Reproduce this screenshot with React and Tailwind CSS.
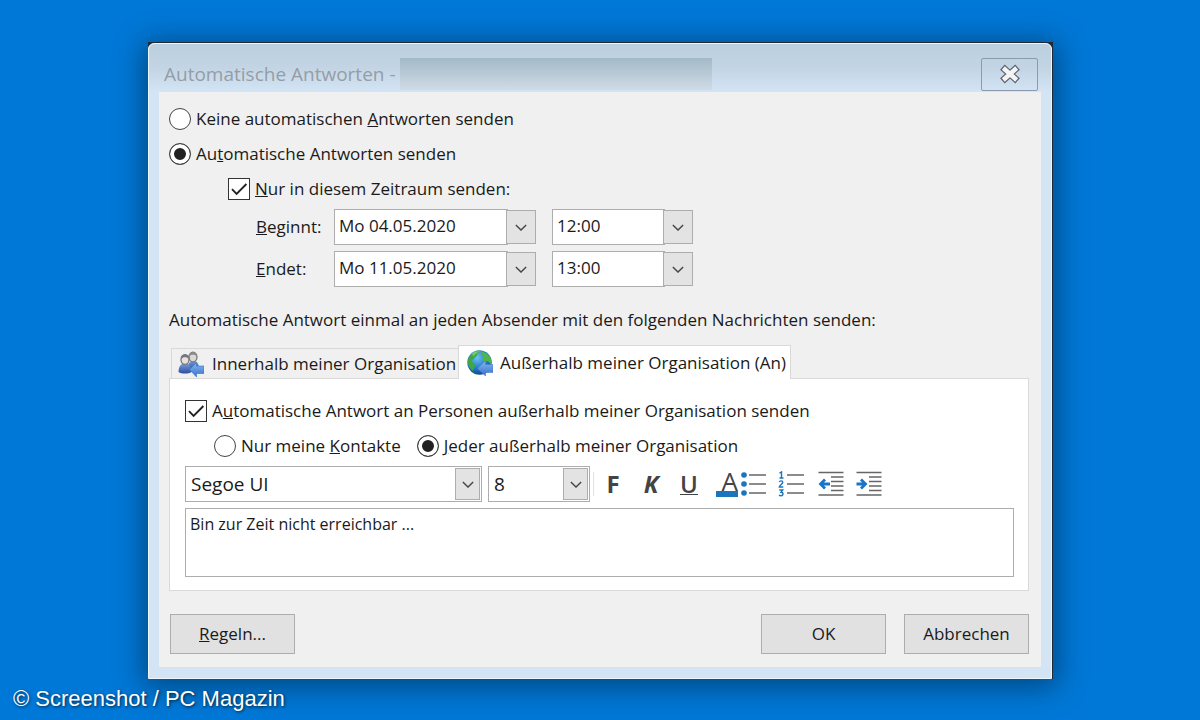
import React, { useState } from "react";

function Radio({ label, ...props }) {
  return (
    <label className="flex items-center gap-[5px] whitespace-nowrap">
      <input
        type="radio"
        className="size-[22px] shrink-0 appearance-none rounded-full border border-[#444] bg-white checked:bg-[#222] checked:shadow-[inset_0_0_0_4px_#fff]"
        {...props}
      />
      <span>{label}</span>
    </label>
  );
}

function Check({ label, ...props }) {
  return (
    <label className="flex items-center gap-[5px]">
      <span className="grid size-[22px] shrink-0">
        <input
          type="checkbox"
          className="peer col-start-1 row-start-1 size-[22px] appearance-none border border-[#333] bg-white"
          {...props}
        />
        <svg
          viewBox="0 0 22 22"
          className="pointer-events-none invisible col-start-1 row-start-1 size-[22px] peer-checked:visible"
          fill="none"
          stroke="#222"
          strokeWidth="1.9"
        >
          <path d="M4 11.2 8.6 15.8 18.4 6" />
        </svg>
      </span>
      <span>{label}</span>
    </label>
  );
}

function Chevron() {
  return (
    <svg viewBox="0 0 14 8" className="h-[7px] w-3" fill="none" stroke="#444" strokeWidth="1.6">
      <path d="M1 1 7 7 13 1" />
    </svg>
  );
}

function DateBox({ id, value, label, width }) {
  return (
    <div className={`grid items-center ${width}`}>
      <select
        id={id}
        aria-label={label}
        defaultValue={value}
        className="col-start-1 row-start-1 h-9 w-[calc(100%-28px)] appearance-none border border-[#adadad] bg-white pb-0.5 pl-1"
      >
        <option>{value}</option>
      </select>
      <span className="pointer-events-none col-start-1 row-start-1 flex h-[34px] w-[30px] items-center justify-center justify-self-end border border-[#adadad] bg-[#e3e3e3]">
        <Chevron />
      </span>
    </div>
  );
}

function FontBox({ label, value, width }) {
  return (
    <div className={`grid ${width}`}>
      <select
        aria-label={label}
        defaultValue={value}
        className="col-start-1 row-start-1 h-9 w-full appearance-none border border-[#adadad] bg-white pr-8 pl-[5px] text-[19px]"
      >
        <option>{value}</option>
      </select>
      <span className="pointer-events-none col-start-1 row-start-1 mr-0.5 flex h-8 w-[25px] items-center justify-center self-center justify-self-end border border-[#adadad] bg-[#e3e3e3]">
        <Chevron />
      </span>
    </div>
  );
}

function ReplyArrow() {
  return (
    <path
      d="M11.5 18.5 18.5 11.5V15H26v7.5h-7.5v3.5Z"
      fill="url(#arrowFill)"
      stroke="#3a6fc0"
      strokeWidth="0.6"
    />
  );
}

function PeopleIcon() {
  return (
    <svg viewBox="0 0 26 26" className="size-[26px]">
      <defs>
        <linearGradient id="arrowFill" x1="0" y1="0" x2="0" y2="1">
          <stop offset="0" stopColor="#8ab8f0" />
          <stop offset="1" stopColor="#3572cc" />
        </linearGradient>
        <linearGradient id="shirt" x1="0" y1="0" x2="0" y2="1">
          <stop offset="0" stopColor="#7a9bdc" />
          <stop offset="1" stopColor="#2b4fa0" />
        </linearGradient>
      </defs>
      <path d="M9.5 19c0-6 2-9 6-9s5.500 3 5.500 9Z" fill="url(#shirt)" />
      <ellipse cx="15" cy="6" rx="4" ry="4.800" fill="#dcd8d6" stroke="#777" strokeWidth="1.300" />
      <path d="M11 5.500C11 0 19 0 19 5.500 17 3 13 3 11 5.500Z" fill="#8a8a8c" />
      <path d="M.5 21C.5 15 3 12.500 7 12.500s6.500 3 6.500 8.500c-3 2-10 2-13 0Z" fill="url(#shirt)" />
      <ellipse cx="7" cy="8.500" rx="4" ry="4.900" fill="#e6e2e0" stroke="#777" strokeWidth="1.300" />
      <path d="M3 8C3 2 11 2 11 8 9 5.500 5 5.500 3 8Z" fill="#77777a" />
      <ReplyArrow />
    </svg>
  );
}

function GlobeIcon() {
  return (
    <svg viewBox="0 0 26 26" className="size-[26px]">
      <defs>
        <radialGradient id="sea" cx="0.4" cy="0.3" r="0.75">
          <stop offset="0" stopColor="#6cc4f2" />
          <stop offset="0.6" stopColor="#2277c8" />
          <stop offset="1" stopColor="#123f86" />
        </radialGradient>
      </defs>
      <circle cx="12.500" cy="12.500" r="12.200" fill="url(#sea)" />
      <path d="M3 5.500C6 2 9 .8 12 .6c1 1.400-.5 2.400-2 3 .5 2-1 3-2.500 4.400C6.500 9.500 5 10 4.500 11.500c1.500 1.500 3.500 2 3.500 4S6.500 19 6 21C1 17.500-1 11 3 5.500Z" fill="#3fa845" />
      <path d="M14 2c3.500-.5 7 2 9 5 1.500 2.500 1.500 5 1 7-1.500-.5-2-2.500-3.500-3-2 .5-3.500.5-5-1-.5-2 1-3 .5-4.500C15 5 13.500 3.500 14 2Z" fill="#4db848" />
      <path d="M5 3.500C8 1 11 .8 13 1.500 10 2.500 8 4 6.500 6.500Z" fill="#9fe0a0" opacity=".6" />
      <path
        d="M10.5 18.5 18.5 10.500V14.500H26v8h-7.500v3.500Z"
        fill="url(#arrowFill)"
        stroke="#4a80cc"
        strokeWidth="0.6"
      />
    </svg>
  );
}

function BulletIcon() {
  return (
    <svg viewBox="0 0 26 26" className="size-[26px]">
      <g fill="#1a75bc">
        <circle cx="3" cy="4" r="2.800" />
        <circle cx="3" cy="13" r="2.800" />
        <circle cx="3" cy="22" r="2.800" />
      </g>
      <path d="M8 4h17M8 13h17M8 22h17" stroke="#666" strokeWidth="1.400" />
    </svg>
  );
}

function NumberIcon() {
  return (
    <svg viewBox="0 0 26 26" className="size-[26px]">
      <g fill="none" stroke="#1a75bc" strokeWidth="1.400">
        <path d="M1.500 2.200 3.500 1v6M1.500 7h4" />
        <path d="M1.300 11c.6-1.600 3.600-1.400 3.400.4C4.600 13 1.400 14.500 1.300 16h4" />
        <path d="M1.300 19h3.400L3 21.300c2.600 0 2.600 3.400 0 3.400-1 0-1.600-.4-1.900-.9" />
      </g>
      <path d="M9 4h17M9 13h17M9 22h17" stroke="#666" strokeWidth="1.400" />
    </svg>
  );
}

function IndentIcon({ outward }) {
  return (
    <svg viewBox="0 0 26 26" className="size-[26px]">
      <path
        d="M.5 1.500h25M13 6h12.500M13 10.500h12.500M13 15h12.500M13 19.500h12.500M.5 24h25"
        stroke="#666"
        strokeWidth="1.400"
      />
      <path
        d={outward ? "M12 13H3M7 8.500 2.500 13 7 17.500" : "M.5 13h9M5 8.500 9.500 13 5 17.500"}
        fill="none"
        stroke="#1a75c8"
        strokeWidth="2.800"
      />
    </svg>
  );
}

function ToolButton({ label, layout = "w-[38px] justify-center", children }) {
  return (
    <button
      type="button"
      aria-label={label}
      className={`flex h-9 items-center text-2xl leading-none text-[#444] ${layout}`}
    >
      {children}
    </button>
  );
}

function DialogButton({ children }) {
  return (
    <button type="button" className="h-10 w-[125px] border border-[#adadad] bg-[#e1e1e1]">
      {children}
    </button>
  );
}

export default function App() {
  const [mode, setMode] = useState("send");
  const [audience, setAudience] = useState("all");

  return (
    <div className="flex min-h-screen flex-col bg-[#0078d7] pt-[42px] font-['Open_Sans','Noto_Sans',sans-serif] text-[17px] leading-6 text-[#1a1a1a]">
      <main className="mr-[147px] ml-37 bg-[#1f2a36] pt-px pr-px shadow-[0_4px_28px_4px_rgba(0,0,0,0.4)]">
        <div className="rounded-t-md border border-[#eef5fa] bg-[#d3e5f4] px-2.5 pb-[11px]">
          <header className="-mx-2.5 flex h-12 items-center rounded-t-md bg-linear-to-b from-[#bccfdf] via-[#c3d5e4] to-[#d3e5f4] pt-3 pr-[13px] pl-[15px]">
            <h1 className="text-[19px] text-[#959da6]">Automatische Antworten -</h1>
            <div className="ml-1 h-8 w-[312px] bg-linear-to-b from-[#a3b9c9] to-[#cfdce5]" />
            <button
              type="button"
              aria-label="Schließen"
              className="ml-auto flex h-[33px] w-[57px] items-center justify-center rounded-xs border border-[#8a9bb0]"
            >
              <svg viewBox="0 0 22 20" className="h-5 w-[22px]" strokeLinecap="square">
                <path d="M6 5.500 16 14.500M16 5.500 6 14.500" stroke="#5b6472" strokeWidth="7" strokeLinejoin="round" />
                <path d="M6 5.500 16 14.500M16 5.500 6 14.500" stroke="#f4f4f4" strokeWidth="4.500" />
              </svg>
            </button>
          </header>

          <form className="bg-[#f0f0f0] pt-[9px] pr-3 pb-[13px] pl-2.5" onSubmit={(e) => e.preventDefault()}>
            <div className="flex h-[35px] items-center">
              <Radio
                name="mode"
                checked={mode === "none"}
                onChange={() => setMode("none")}
                label={<>Keine automatischen <u>A</u>ntworten senden</>}
              />
            </div>
            <div className="flex h-[35px] items-center">
              <Radio
                name="mode"
                checked={mode === "send"}
                onChange={() => setMode("send")}
                label={<>Au<u>t</u>omatische Antworten senden</>}
              />
            </div>
            <div className="flex h-[35px] items-center pl-[59px]">
              <Check defaultChecked label={<><u>N</u>ur in diesem Zeitraum senden:</>} />
            </div>

            <div className="mt-[3px] grid grid-cols-[78px_auto_auto] items-center justify-start gap-y-1.5 pl-[87px]">
              <label htmlFor="start"><u>B</u>eginnt:</label>
              <DateBox id="start" value="Mo 04.05.2020" width="w-[202px]" />
              <div className="pl-4">
                <DateBox label="Beginnt um" value="12:00" width="w-[141px]" />
              </div>
              <label htmlFor="end"><u>E</u>ndet:</label>
              <DateBox id="end" value="Mo 11.05.2020" width="w-[202px]" />
              <div className="pl-4">
                <DateBox label="Endet um" value="13:00" width="w-[141px]" />
              </div>
            </div>

            <p className="mt-4 flex h-[34px] items-center">
              Automatische Antwort einmal an jeden Absender mit den folgenden Nachrichten senden:
            </p>

            <div role="tablist" className="mt-2 flex items-end pl-0.5">
              <button
                type="button"
                role="tab"
                aria-selected="false"
                className="flex h-[30px] items-center gap-2 border border-r-0 border-b-0 border-[#d9d9d9] bg-[#f0f0f0] pr-0.5 pl-1.5 whitespace-nowrap"
              >
                <PeopleIcon />
                Innerhalb meiner Organisation
              </button>
              <button
                type="button"
                role="tab"
                aria-selected="true"
                className="relative -mb-px flex h-[34px] items-center gap-[7px] border border-b-0 border-[#d9d9d9] bg-white pr-1 pl-2 whitespace-nowrap"
              >
                <GlobeIcon />
                Außerhalb meiner Organisation (An)
              </button>
            </div>

            <section role="tabpanel" className="border border-[#d9d9d9] bg-white pt-3.5 pr-3.5 pb-[13px] pl-[15px]">
              <div className="flex h-[35px] items-center">
                <Check
                  defaultChecked
                  label={<>A<u>u</u>tomatische Antwort an Personen außerhalb meiner Organisation senden</>}
                />
              </div>
              <div className="flex h-[35px] items-center gap-4 pl-[29px]">
                <Radio
                  name="audience"
                  checked={audience === "contacts"}
                  onChange={() => setAudience("contacts")}
                  label={<>Nur meine <u>K</u>ontakte</>}
                />
                <Radio
                  name="audience"
                  checked={audience === "all"}
                  onChange={() => setAudience("all")}
                  label={<><u>J</u>eder außerhalb meiner Organisation</>}
                />
              </div>
              <div className="mt-[3px] flex items-center">
                <FontBox label="Schriftart" value="Segoe UI" width="w-[297px]" />
                <div className="ml-1.5 flex items-center">
                  <FontBox label="Schriftgrad" value="8" width="w-[102px]" />
                </div>
                <div className="ml-[3px] h-6 w-px bg-[#e2e2e2]" />
                <ToolButton label="Fett"><span className="font-bold">F</span></ToolButton>
                <ToolButton label="Kursiv"><span className="font-bold italic">K</span></ToolButton>
                <ToolButton label="Unterstrichen">
                  <span className="border-b border-[#444] leading-5 font-semibold">U</span>
                </ToolButton>
                <ToolButton label="Schriftfarbe" layout="w-[30px] justify-end">
                  <span className="flex w-[22px] flex-col items-end border-b-6 border-[#1a75bc] text-[26px] leading-5">A</span>
                </ToolButton>
                <ToolButton label="Aufzählung" layout="w-8 justify-center"><BulletIcon /></ToolButton>
                <ToolButton label="Nummerierung" layout="w-[42px] justify-center"><NumberIcon /></ToolButton>
                <ToolButton label="Einzug verkleinern"><IndentIcon outward /></ToolButton>
                <ToolButton label="Einzug vergrößern"><IndentIcon /></ToolButton>
              </div>
              <textarea
                aria-label="Nachricht"
                defaultValue="Bin zur Zeit nicht erreichbar ..."
                className="mt-1.5 block h-[69px] w-full resize-none border border-[#adadad] bg-white px-1 py-[3px] text-base"
              />
            </section>

            <div className="mt-[23px] flex justify-between gap-[18px] pl-px">
              <DialogButton><u>R</u>egeln...</DialogButton>
              <div className="flex gap-[18px]">
                <DialogButton>OK</DialogButton>
                <DialogButton>Abbrechen</DialogButton>
              </div>
            </div>
          </form>
        </div>
      </main>
      <footer className="relative pt-2 pl-[13px] font-['Liberation_Sans',sans-serif] text-[22px] text-white [text-shadow:1px_1px_3px_rgba(0,0,0,0.7)]">
        © Screenshot / PC Magazin
      </footer>
    </div>
  );
}
